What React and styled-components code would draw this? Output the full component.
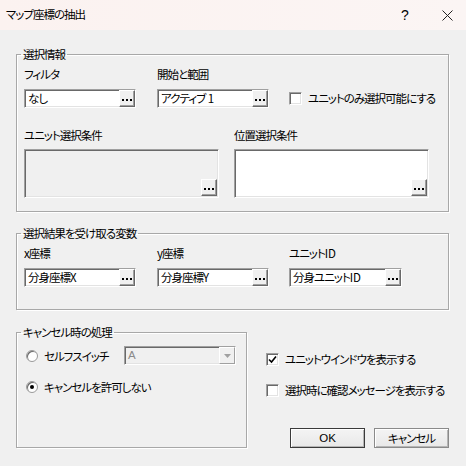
import React from 'react'
import styled, { createGlobalStyle } from 'styled-components'

const GlobalStyle = createGlobalStyle`
  html, body { margin: 0; padding: 0; }
  body {
    background: #f0f0f0;
    font-family: "Noto Sans CJK JP", "Noto Sans", sans-serif;
    font-size: 11.5px;
    letter-spacing: -1px;
    font-feature-settings: "palt";
    color: #000;
  }
`

const Window = styled.div`
  width: 466px;
  height: 466px;
  background: #f0f0f0;
  display: flex;
  flex-direction: column;
  overflow: hidden;
`

const TitleBar = styled.div`
  height: 30px;
  flex: none;
  display: flex;
  align-items: center;
  padding-left: 6px;
  background: linear-gradient(to right, #fbf2f0, #fbf5f4);
`

const Title = styled.div`
  flex: 1;
  line-height: 14px;
  padding-bottom: 2px;
`

const CaptionButton = styled.div`
  width: ${p => p.w}px;
  height: 30px;
  display: flex;
  align-items: center;
  justify-content: center;
  font-family: "Liberation Sans", sans-serif;
  font-size: 14px;
  letter-spacing: 0;
`

const Body = styled.div`
  padding: 17px 17px 0 16px;
  display: flex;
  flex-direction: column;
`

const Group = styled.fieldset`
  margin: ${p => p.mt || 0}px 0 0 0;
  padding: ${p => p.pt || 6}px 7px ${p => p.pb || 13}px 7px;
  border: 1px solid #a8a8a8;
  box-shadow: inset 1px 1px 0 #fff, 1px 1px 0 #fff;
  min-width: 0;
  width: ${p => (p.w ? p.w + 'px' : 'auto')};
  box-sizing: border-box;
  flex: none;
`

const Legend = styled.legend`
  padding: 0 2px;
  margin-left: -3px;
  line-height: 14px;
`

const ThreeCols = styled.div`
  display: grid;
  grid-template-columns: 133px 132px 1fr;
`

const TwoCols = styled.div`
  display: grid;
  grid-template-columns: 210px 1fr;
  margin-top: ${p => p.mt || 0}px;
`

const Column = styled.div`
  display: flex;
  flex-direction: column;
  gap: ${p => p.gap || 8}px;
`

const Label = styled.div`
  line-height: 14px;
  height: 14px;
  white-space: nowrap;
`

const Latin = styled.span`
  letter-spacing: 0;
`

const Field = styled.div`
  width: ${p => p.w}px;
  height: 19px;
  box-sizing: border-box;
  display: flex;
  align-items: stretch;
  background: #fff;
  border: 1px solid;
  border-color: #a0a0a0 #fff #fff #a0a0a0;
  box-shadow: inset 1px 1px 0 #696969, inset -1px -1px 0 #e3e3e3;
`

const FieldText = styled.div`
  flex: 1;
  min-width: 0;
  padding: 1px 0 0 3px;
  line-height: 15px;
  white-space: pre;
  overflow: hidden;
`

const DotButton = styled.div`
  width: 16px;
  height: 17px;
  box-sizing: border-box;
  flex: none;
  background: #f0f0f0;
  border: 1px solid;
  border-color: #fff #696969 #696969 #fff;
  box-shadow: inset -1px -1px 0 #a0a0a0;
  display: flex;
  align-items: flex-end;
  justify-content: center;
  gap: 2px;
  padding-bottom: 5px;
  margin-left: auto;
`

const Dot = styled.span`
  width: 2px;
  height: 2px;
  background: #000;
`

const BigBox = styled.div`
  width: 195px;
  height: 49px;
  box-sizing: border-box;
  background: ${p => (p.disabled ? '#f0f0f0' : '#fff')};
  border: 1px solid;
  border-color: #a0a0a0 #fff #fff #a0a0a0;
  box-shadow: inset 1px 1px 0 #696969, inset -1px -1px 0 #e3e3e3;
  display: flex;
  align-items: flex-end;
  justify-content: flex-end;
  padding: 0 1px 1px 0;
`

const CheckRow = styled.div`
  display: flex;
  align-items: center;
  gap: 6px;
  align-self: ${p => p.self || 'auto'};
  margin: ${p => p.m || '0'};
  line-height: 14px;
  white-space: nowrap;
`

const Box = styled.div`
  width: 13px;
  height: 13px;
  box-sizing: border-box;
  background: #fff;
  border: 1px solid;
  border-color: #a0a0a0 #fff #fff #a0a0a0;
  box-shadow: inset 1px 1px 0 #696969, inset -1px -1px 0 #e3e3e3;
  display: flex;
  align-items: center;
  justify-content: center;
  flex: none;
`

const Radio = styled.div`
  width: 12px;
  height: 12px;
  box-sizing: border-box;
  border-radius: 50%;
  background: #fff;
  border: 1px solid #9a9a9a;
  box-shadow: inset 1px 1px 0 #6a6a6a;
  display: flex;
  align-items: center;
  justify-content: center;
  flex: none;
  margin-left: 2px;
`

const RadioDot = styled.span`
  width: 4px;
  height: 4px;
  border-radius: 50%;
  background: #000;
`

const OptionGrid = styled.div`
  display: grid;
  grid-template-columns: 100px 1fr;
  align-items: center;
  margin-top: ${p => p.mt || 0}px;
`

const Combo = styled.div`
  width: 112px;
  height: 19px;
  box-sizing: border-box;
  display: flex;
  background: #f0f0f0;
  border: 1px solid;
  border-color: #a0a0a0 #fff #fff #a0a0a0;
  box-shadow: inset 1px 1px 0 #696969, inset -1px -1px 0 #e3e3e3;
`

const ComboText = styled.div`
  flex: 1;
  padding: 1px 0 0 3px;
  line-height: 15px;
  color: #8a8a8a;
  font-family: "Liberation Sans", sans-serif;
  letter-spacing: 0;
`

const ComboArrow = styled.div`
  width: 16px;
  height: 17px;
  box-sizing: border-box;
  background: #f0f0f0;
  border: 1px solid;
  border-color: #fff #a0a0a0 #a0a0a0 #fff;
  display: flex;
  align-items: center;
  justify-content: center;
`

const BottomRow = styled.div`
  display: flex;
  margin-top: 15px;
`

const RightColumn = styled.div`
  flex: 1;
  min-width: 0;
  display: flex;
  flex-direction: column;
  padding: 27px 0 0 19px;
`

const ButtonRow = styled.div`
  display: flex;
  justify-content: flex-end;
  gap: 9px;
  margin-top: 31px;
`

const Button = styled.div`
  width: 75px;
  height: 20px;
  flex: none;
  box-sizing: border-box;
  display: flex;
  align-items: center;
  justify-content: center;
  background: linear-gradient(#f4f4f4, #e8e8e8);
  border: 1px solid ${p => (p.primary ? '#3a3a3a' : '#8a8a8a')};
  box-shadow: inset 1px 1px 0 #fff, inset -1px -1px 0 #b5b5b5;
  font-family: ${p => (p.latin ? '"Liberation Sans", sans-serif' : 'inherit')};
  letter-spacing: ${p => (p.latin ? '0' : '-1px')};
  line-height: 14px;
`

const Dots = () => (
  <DotButton>
    <Dot />
    <Dot />
    <Dot />
  </DotButton>
)

const TextField = ({ w, children }) => (
  <Field w={w}>
    <FieldText>{children}</FieldText>
    <Dots />
  </Field>
)

const Check = ({ checked }) => (
  <Box>
    {checked && (
      <svg width="9" height="9" viewBox="0 0 9 9">
        <path d="M1 4.5 L3.5 7 L8 1.5" fill="none" stroke="#000" strokeWidth="1.6" />
      </svg>
    )}
  </Box>
)

export default function App() {
  return (
    <Window>
      <GlobalStyle />
      <TitleBar>
        <Title>マップ座標の抽出</Title>
        <CaptionButton w={46}>?</CaptionButton>
        <CaptionButton w={38}>
          <svg width="11" height="11" viewBox="0 0 11 11">
            <path d="M0.5 0.5 L10.5 10.5 M10.5 0.5 L0.5 10.5" stroke="#222" strokeWidth="1" />
          </svg>
        </CaptionButton>
      </TitleBar>

      <Body>
        <Group>
          <Legend>選択情報</Legend>
          <ThreeCols>
            <Column>
              <Label>フィルタ</Label>
              <TextField w={112}>なし</TextField>
            </Column>
            <Column>
              <Label>開始と範囲</Label>
              <TextField w={112}>
                アクティブ<Latin> 1</Latin>
              </TextField>
            </Column>
            <CheckRow self="end" m="0 0 3px 0">
              <Check />
              <span>ユニットのみ選択可能にする</span>
            </CheckRow>
          </ThreeCols>
          <TwoCols mt={20}>
            <Column gap={7}>
              <Label>ユニット選択条件</Label>
              <BigBox disabled>
                <Dots />
              </BigBox>
            </Column>
            <Column gap={7}>
              <Label>位置選択条件</Label>
              <BigBox>
                <Dots />
              </BigBox>
            </Column>
          </TwoCols>
        </Group>

        <Group mt={14} pb={22}>
          <Legend>選択結果を受け取る変数</Legend>
          <ThreeCols>
            <Column>
              <Label>x座標</Label>
              <TextField w={112}>
                分身座標<Latin>X</Latin>
              </TextField>
            </Column>
            <Column>
              <Label>y座標</Label>
              <TextField w={112}>
                分身座標<Latin>Y</Latin>
              </TextField>
            </Column>
            <Column>
              <Label>
                ユニット<Latin>ID</Latin>
              </Label>
              <TextField w={113}>
                分身ユニット<Latin>ID</Latin>
              </TextField>
            </Column>
          </ThreeCols>
        </Group>

        <BottomRow>
          <Group w={231} pt={7} pb={14}>
            <Legend>キャンセル時の処理</Legend>
            <OptionGrid>
              <CheckRow>
                <Radio />
                <span>セルフスイッチ</span>
              </CheckRow>
              <Combo>
                <ComboText>A</ComboText>
                <ComboArrow>
                  <svg width="7" height="4" viewBox="0 0 7 4">
                    <path d="M0 0 L7 0 L3.5 4 Z" fill="#a0a0a0" />
                  </svg>
                </ComboArrow>
              </Combo>
            </OptionGrid>
            <OptionGrid mt={15}>
              <CheckRow>
                <Radio>
                  <RadioDot />
                </Radio>
                <span>キャンセルを許可しない</span>
              </CheckRow>
            </OptionGrid>
          </Group>

          <RightColumn>
            <CheckRow>
              <Check checked />
              <span>ユニットウインドウを表示する</span>
            </CheckRow>
            <CheckRow m="17px 0 0 0">
              <Check />
              <span>選択時に確認メッセージを表示する</span>
            </CheckRow>
            <ButtonRow>
              <Button primary latin>OK</Button>
              <Button>キャンセル</Button>
            </ButtonRow>
          </RightColumn>
        </BottomRow>
      </Body>
    </Window>
  )
}
